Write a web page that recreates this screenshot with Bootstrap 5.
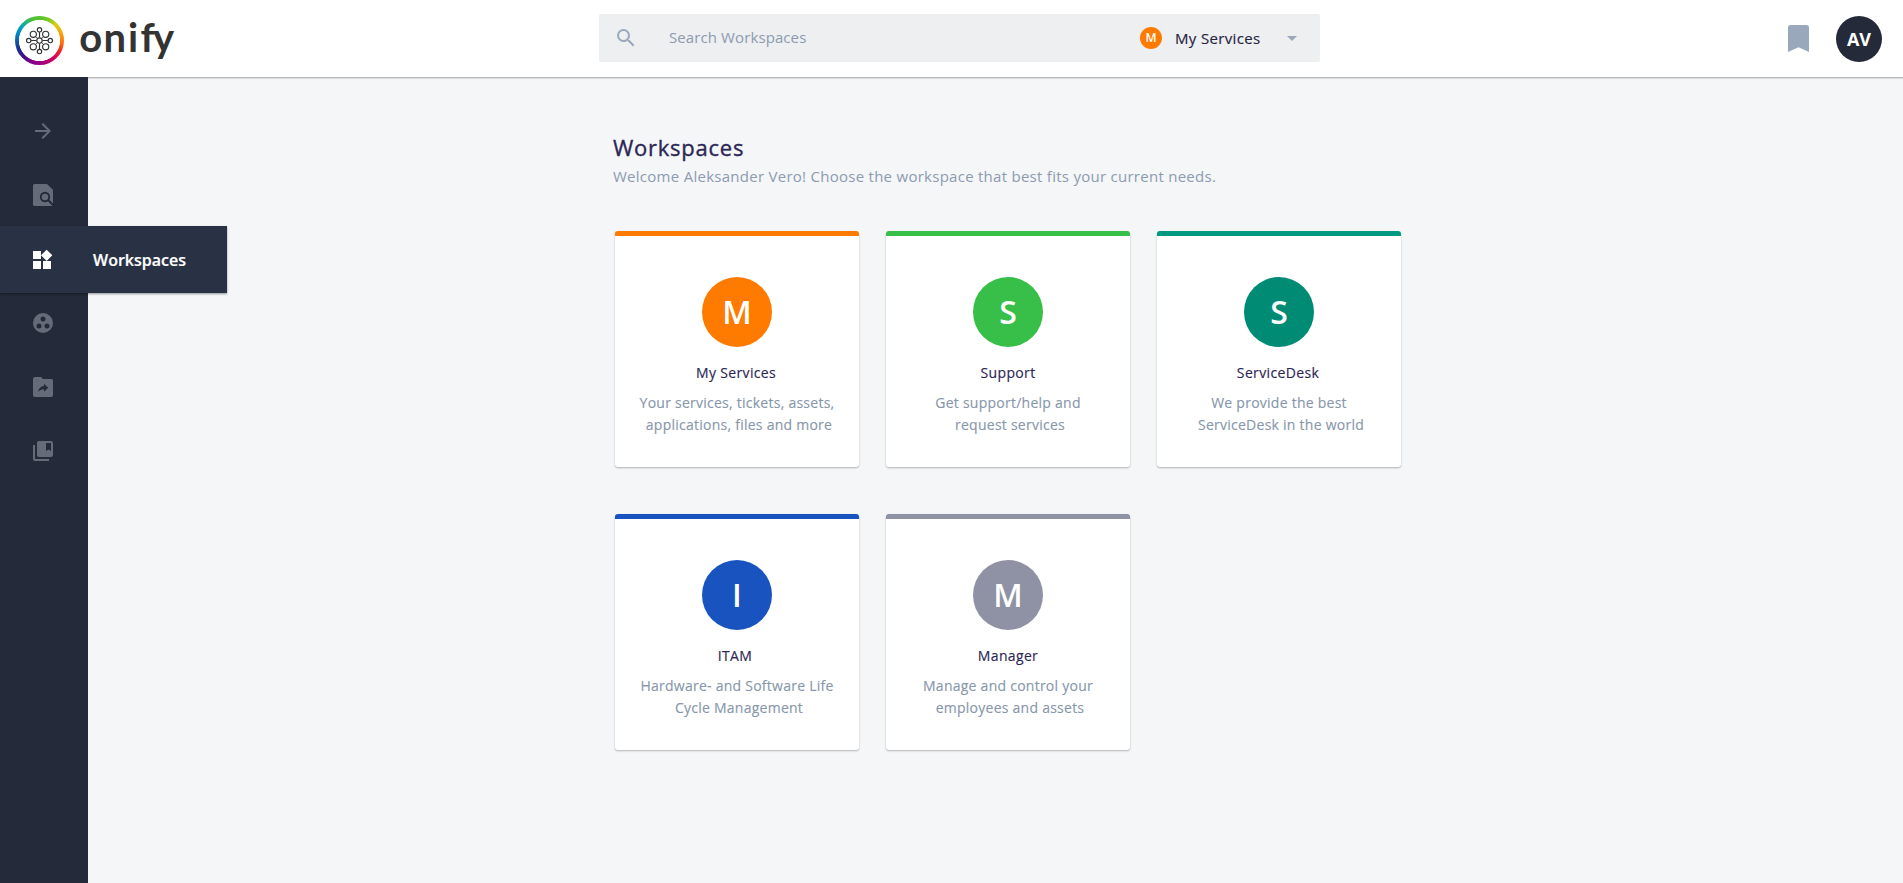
<!DOCTYPE html>
<html lang="en">
<head>
<meta charset="utf-8">
<meta name="viewport" content="width=device-width, initial-scale=1">
<title>Workspaces - onify</title>
<link href="https://cdn.jsdelivr.net/npm/bootstrap@5.3.0/dist/css/bootstrap.min.css" rel="stylesheet">
<style>
  body { font-family: "Open Sans", sans-serif; font-size: 14px; background: #f4f6f8; color: #2c2655; }
  svg { display: block; flex: none; overflow: visible; }
  .topbar { height: 77px; box-shadow: 0 1px 1px rgba(0,0,0,.22), 0 2px 1px rgba(0,0,0,.05); display: grid; grid-template-columns: 599px 721px 1fr; }
  .ring { width: 49px; height: 49px; margin: 3px 0 0 15px; border-radius: 50%;
    background: radial-gradient(circle, #fff 20.3px, transparent 20.9px),
      conic-gradient(#52c22d 0deg, #7dca23 25deg, #dccb0d 45deg, #f6a90b 70deg, #ff6b0c 98deg, #ee1c2e 120deg, #d70058 140deg, #a3007c 170deg, #820087 200deg, #480a8b 222deg, #1b2b91 245deg, #1650a4 265deg, #0082c8 285deg, #00a2b8 305deg, #29b67b 325deg, #52c22d 345deg); }
  .search-box { height: 48px; margin-top: 14px; padding-left: 15px; background: #edeff1; border-radius: 2px; }
  .search-box .hint { color: #8c9bb0; font-size: 15px; letter-spacing: .1px; margin-left: 31px; line-height: 20px; margin-bottom: 2px; }
  .picked { width: 86px; white-space: nowrap; font-size: 15px; letter-spacing: .35px; -webkit-text-stroke: .15px; color: #27233f; line-height: 20px; margin: 0 19px 0 13px; }
  .dot-sm { width: 22px; height: 22px; font-size: 12px; font-weight: 600; background: #ff7b00; }
  .avatar { width: 46px; height: 46px; margin: 1px 21px 0 27px; background: #242a39; font-size: 18px; font-weight: 700; }
  .sidebar { width: 88px; height: 806px; padding-top: 22px; background: #242a39; position: relative; z-index: 2; }
  .side-item { height: 64px; padding-left: 31px; color: #656b79; }
  .side-item.active { height: 67px; width: 227px; margin: -1px 0 -2px; padding-left: 30px; background: #293144; color: #fff;
    box-shadow: 0 1px 2px rgba(0,0,0,.4); position: relative; }
  .side-item.active span { font-size: 16px; font-weight: 600; -webkit-text-stroke: .2px; margin-left: 39px; }
  .content { padding: 56px 0 0 525px; }
  h1 { font-size: 22px; line-height: 28px; font-weight: 400; letter-spacing: .75px; -webkit-text-stroke: .35px; color: #2c2655; }
  .intro { font-size: 15px; line-height: 22px; color: #8c9bb0; letter-spacing: .27px; margin-top: 4px; }
  .tiles { display: grid; grid-template-columns: repeat(3, 244px); gap: 47px 27px; margin: 44px 0 0 2px; }
  .tile { height: 236px; background: #fff; border-top: 5px solid var(--tone); border-radius: 3px; padding-top: 41px;
    box-shadow: 0 1px 2px rgba(0,0,0,.28); }
  .disc { width: 70px; height: 70px; background: var(--disc, var(--tone)); font-size: 32px; font-weight: 600; }
  .tile h2 { font-size: 14px; line-height: 22px; font-weight: 400; letter-spacing: .35px; -webkit-text-stroke: .15px; margin: 15px 2px 8px 0; }
  .tile p { font-size: 14px; line-height: 22px; letter-spacing: .25px; -webkit-text-stroke: .12px; color: #8696ab; }
  .tile p span { padding-left: 4px; }
</style>
</head>
<body>
<header class="topbar bg-white">
  <div class="d-flex align-items-center">
    <div class="ring">
      <svg width="49" height="49" viewBox="0 0 49 49" fill="none" stroke="#333" stroke-width="1.15">
        <path d="M24.500 16v5.500M24.500 27.500v6M16 24.500h5.500M27.500 24.500h6"/>
        <path stroke-width=".8" d="M20.700 20.700l1.600 1.600M28.300 20.700l-1.600 1.600M20.700 28.300l1.600-1.600M28.300 28.300l-1.600-1.600"/>
        <circle cx="24.500" cy="24.500" r="2.700"/>
        <circle cx="24.500" cy="13.800" r="2.200"/><circle cx="24.500" cy="35.500" r="2.200"/>
        <circle cx="13.700" cy="24.500" r="2.200"/><circle cx="35.300" cy="24.500" r="2.200"/>
        <circle cx="18.300" cy="18.300" r="3.100"/><circle cx="30.700" cy="18.300" r="3.100"/>
        <circle cx="18.300" cy="30.800" r="3.100"/><circle cx="30.700" cy="30.800" r="3.100"/>
      </svg>
    </div>
    <svg class="ms-3" width="100" height="77" viewBox="0 0 100 77"><text x="-.7 23.500 48 60.500 73" y="51.500" font-family="Lato, sans-serif" font-weight="700" font-size="40" fill="#333">onify</text></svg>
  </div>
  <div class="search-box d-flex align-items-center">
    <svg width="24" height="24" viewBox="0 0 24 24" fill="#9aa8bc"><path d="M15.500 14h-.79l-.28-.27A6.471 6.471 0 0 0 16 9.500 6.500 6.500 0 1 0 9.500 16c1.610 0 3.090-.59 4.230-1.570l.27.280v.79l5 4.990L20.490 19l-4.990-5zm-6 0C7.010 14 5 11.990 5 9.500S7.010 5 9.500 5 14 7.010 14 9.500 11.990 14 9.500 14z"/></svg>
    <span class="hint">Search Workspaces</span>
    <span class="dot-sm mt-1 mb-1 rounded-circle text-white d-flex align-items-center justify-content-center ms-auto">M</span>
    <span class="picked">My Services</span>
    <svg class="me-3" width="24" height="24" viewBox="0 0 24 24" fill="#9aa8bc"><path d="M7 10l5 5 5-5z"/></svg>
  </div>
  <div class="d-flex align-items-center justify-content-end">
    <svg width="21" height="27" viewBox="0 0 21 27" fill="#9aa8bc"><path d="M2.500 0h16A2.500 2.500 0 0 1 21 2.500V27l-10.500-4.700L0 27V2.500A2.500 2.500 0 0 1 2.500 0z"/></svg>
    <span class="avatar rounded-circle text-white d-flex align-items-center justify-content-center">AV</span>
  </div>
</header>
<div class="d-flex">
  <nav class="sidebar">
    <div class="side-item d-flex align-items-center"><svg width="24" height="24" viewBox="0 0 24 24" fill="currentColor"><path d="M12 4l-1.410 1.410L16.170 11H4v2h12.170l-5.580 5.590L12 20l8-8z"/></svg></div>
    <div class="side-item d-flex align-items-center"><svg width="24" height="24" viewBox="0 0 24 24"><path fill="currentColor" d="M3.500 1h12.500l6 6v14l-1 2H3.500A1.500 1.500 0 0 1 2 21.500v-19A1.500 1.500 0 0 1 3.500 1z"/><circle cx="14" cy="14" r="4.200" fill="none" stroke="#242a39" stroke-width="1.900"/><path d="M16.800 16.800l5.500 5.500" stroke="#242a39" stroke-width="2"/></svg></div>
    <div class="side-item active d-flex align-items-center"><svg width="24" height="24" viewBox="0 0 24 24" fill="currentColor"><path d="M13 13v8h8v-8zM3 21h8v-8H3zM3 3v8h8V3zM16.660 1.690L11 7.340 16.660 13l5.660-5.660z"/></svg><span>Workspaces</span></div>
    <div class="side-item d-flex align-items-center"><svg width="24" height="24" viewBox="0 0 24 24" fill="currentColor"><circle cx="12" cy="12" r="10"/><g fill="#242a39"><circle cx="12" cy="8" r="2.500"/><circle cx="8" cy="15" r="2.500"/><circle cx="16" cy="15" r="2.500"/></g></svg></div>
    <div class="side-item d-flex align-items-center"><svg width="24" height="24" viewBox="0 0 24 24" fill="currentColor"><path d="M4 2h6l2 2h8.500A1.500 1.500 0 0 1 22 5.500V20a2 2 0 0 1-2 2H4a2 2 0 0 1-2-2V4a2 2 0 0 1 2-2z"/><path fill="#242a39" d="M7 17c.7-3.600 2.800-5.500 6-5.900V8.700l4.200 4-4.200 4v-2.500c-2.600 0-4.500.9-6 2.800z"/></svg></div>
    <div class="side-item d-flex align-items-center"><svg width="24" height="24" viewBox="0 0 24 24" fill="currentColor"><path d="M4 6H2v14c0 1.100.9 2 2 2h14v-2H4z"/><path d="M20 2H8c-1.100 0-2 .9-2 2v12c0 1.100.9 2 2 2h12c1.100 0 2-.9 2-2V4c0-1.100-.9-2-2-2zm0 10l-2.500-1.500L15 12V4h5z"/></svg></div>
  </nav>
  <main class="content">
    <h1 class="mb-0">Workspaces</h1>
    <p class="intro mb-0">Welcome Aleksander Vero! Choose the workspace that best fits your current needs.</p>
    <div class="tiles text-center">
      <section class="tile" style="--tone:#ff7b00"><div class="disc rounded-circle text-white mx-auto d-flex align-items-center justify-content-center">M</div><h2>My Services</h2><p class="mb-0">Your services, tickets, assets,<br><span>applications, files and more</span></p></section>
      <section class="tile" style="--tone:#38bf4a"><div class="disc rounded-circle text-white mx-auto d-flex align-items-center justify-content-center">S</div><h2 class="me-0">Support</h2><p class="mb-0">Get support/help and<br><span>request services</span></p></section>
      <section class="tile" style="--tone:#00997f;--disc:#008b74"><div class="disc rounded-circle text-white mx-auto d-flex align-items-center justify-content-center">S</div><h2>ServiceDesk</h2><p class="mb-0">We provide the best<br><span>ServiceDesk in the world</span></p></section>
      <section class="tile" style="--tone:#1853c0"><div class="disc rounded-circle text-white mx-auto d-flex align-items-center justify-content-center">I</div><h2 class="me-1">ITAM</h2><p class="mb-0">Hardware- and Software Life<br><span>Cycle Management</span></p></section>
      <section class="tile" style="--tone:#8f92a4"><div class="disc rounded-circle text-white mx-auto d-flex align-items-center justify-content-center">M</div><h2 class="me-0">Manager</h2><p class="mb-0">Manage and control your<br><span>employees and assets</span></p></section>
    </div>
  </main>
</div>
<script src="https://cdn.jsdelivr.net/npm/bootstrap@5.3.0/dist/js/bootstrap.bundle.min.js"></script>
</body>
</html>
